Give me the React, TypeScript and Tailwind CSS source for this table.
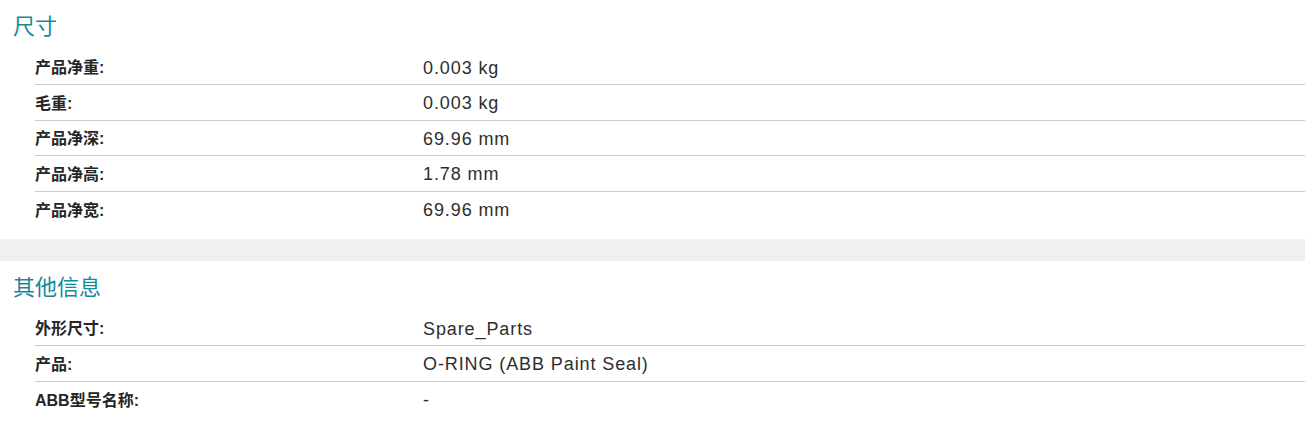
const sections = [
  {
    title: "尺寸",
    rows: [
      ["产品净重:", "0.003 kg"],
      ["毛重:", "0.003 kg"],
      ["产品净深:", "69.96 mm"],
      ["产品净高:", "1.78 mm"],
      ["产品净宽:", "69.96 mm"],
    ],
  },
  {
    title: "其他信息",
    rows: [
      ["外形尺寸:", "Spare_Parts"],
      ["产品:", "O-RING (ABB Paint Seal)"],
      ["ABB型号名称:", "-"],
    ],
  },
];

function Section({ title, rows, last }: { title: string; rows: string[][]; last?: boolean }) {
  return (
    <section className={`pt-[12px] ${last ? "pb-[9px]" : "pb-[12px]"}`}>
      <h2 className="pl-[13px] text-[22px] leading-[30px] text-[#16899a] font-normal">{title}</h2>
      <div className="ml-[35px] mt-[7.5px]">
        {rows.map(([label, value], i) => (
          <div
            key={label}
            className={`flex items-center pt-[3px] h-[35.5px] ${i < rows.length - 1 ? "border-b border-[#cccccc]" : ""}`}
          >
            <div className="w-[388px] text-[16px] font-bold text-[#262626]">{label}</div>
            <div className="text-[18px] tracking-[0.9px] text-[#2e2e2e]">{value}</div>
          </div>
        ))}
      </div>
    </section>
  );
}

export default function App() {
  return (
    <div className="w-[1305px] h-[426px] bg-white font-['Liberation_Sans','Noto_Sans_CJK_SC',sans-serif]">
      <Section title={sections[0].title} rows={sections[0].rows} />
      <div className="h-[22px] bg-[#f0f0f0]" />
      <Section title={sections[1].title} rows={sections[1].rows} last />
    </div>
  );
}
